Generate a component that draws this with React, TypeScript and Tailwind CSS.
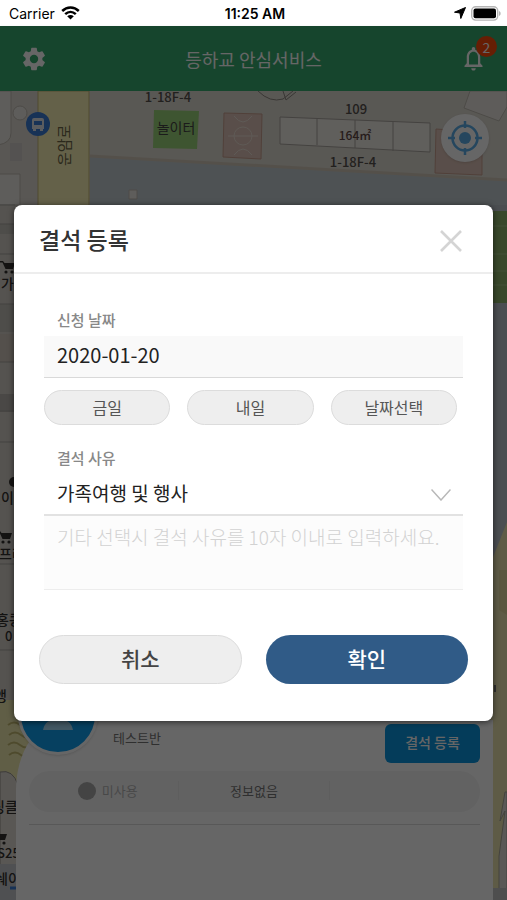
import React from "react";

const dateChoices = ["금일", "내일", "날짜선택"];

function StatusBar() {
  return (
    <div className="grid h-[26px] grid-cols-3 items-center bg-white pl-[9px] pr-[6px] font-['Inter',sans-serif] text-[14px] text-black">
      <div className="flex items-center gap-[6px]">
        <span>Carrier</span>
        <svg width="19" height="14" viewBox="0 0 19 14" fill="none" stroke="#000" strokeWidth="2.5" aria-hidden="true">
          <path d="M1.2 5C6 .3 13 .3 17.8 5" />
          <path d="M4.2 8.2c3.2-3 7.4-3 10.6 0" />
          <path d="M9.5 13.6 6.2 10.3c2-1.7 4.600-1.700 6.600 0Z" fill="#000" stroke="none" />
        </svg>
      </div>
      <div className="text-center font-semibold">11:25 AM</div>
      <div className="flex items-center justify-end gap-[5px]">
        <svg width="12" height="12" viewBox="0 0 12 12" aria-hidden="true">
          <path d="M11.500.5 6.800 11.500 6 6 .5 5.200Z" fill="#000" stroke="#000" strokeLinejoin="round" />
        </svg>
        <svg width="30" height="15" viewBox="0 0 30 15" aria-hidden="true">
          <rect x=".7" y=".7" width="26" height="13.400" rx="4" fill="#fff" stroke="#b5b5b5" strokeWidth="1.400" />
          <rect x="2.500" y="2.500" width="22.500" height="9.800" rx="2" fill="#000" />
          <path d="M28 5v5c2.200-1 2.200-4 0-5Z" fill="#b5b5b5" />
        </svg>
      </div>
    </div>
  );
}

function Header() {
  return (
    <header className="grid h-[65px] shrink-0 grid-cols-[1fr_auto_1fr] items-center bg-[#38ad72] px-[20px] shadow">
      <button type="button" aria-label="설정" className="justify-self-start">
        <svg width="28" height="28" viewBox="0 0 24 24" fill="#fff" aria-hidden="true">
          <path d="M19.140 12.940c.04-.3.06-.61.06-.94 0-.32-.02-.64-.07-.94l2.030-1.580a.49.49 0 0 0 .12-.61l-1.920-3.320a.488.488 0 0 0-.59-.22l-2.390.96c-.5-.38-1.030-.7-1.620-.94l-.36-2.540a.484.484 0 0 0-.48-.41h-3.840c-.24 0-.43.17-.47.41l-.36 2.540c-.59.24-1.130.57-1.620.94l-2.390-.96a.477.477 0 0 0-.59.22L2.740 8.870c-.12.21-.08.47.12.61l2.030 1.580c-.05.3-.09.63-.09.94s.02.64.07.94l-2.030 1.580a.49.49 0 0 0-.12.61l1.920 3.320c.12.22.37.29.59.22l2.390-.96c.5.38 1.030.7 1.620.94l.36 2.540c.05.24.24.41.48.41h3.840c.24 0 .44-.17.47-.41l.36-2.540c.59-.24 1.130-.56 1.620-.94l2.390.96c.22.08.47 0 .59-.22l1.920-3.320a.477.477 0 0 0-.12-.61l-2.010-1.580zM12 15.600A3.600 3.600 0 1 1 12 8.400a3.600 3.600 0 0 1 0 7.200z" />
        </svg>
      </button>
      <h1 className="text-[18px] leading-[26px] text-white">등하교 안심서비스</h1>
      <button type="button" aria-label="알림" className="relative justify-self-end">
        <svg width="27" height="29" viewBox="0 0 24 24" fill="#fff" preserveAspectRatio="none" aria-hidden="true">
          <path d="M12 22c1.100 0 2-.9 2-2h-4c0 1.100.9 2 2 2zm6-6v-5c0-3.070-1.630-5.640-4.500-6.320V4c0-.83-.67-1.500-1.500-1.500s-1.500.67-1.500 1.500v.68C7.640 5.360 6 7.920 6 11v5l-2 2v1h16v-1l-2-2zm-2 1H8v-6c0-2.480 1.510-4.500 4-4.500s4 2.020 4 4.500v6z" />
        </svg>
        <span className="absolute -right-[10px] -top-[8px] flex size-[21px] items-center justify-center rounded-full bg-[#ff4b0a] text-[14px] leading-[20px] text-white">
          2
        </span>
      </button>
    </header>
  );
}

function Cart({ x, y }: { x: number; y: number }) {
  return (
    <g transform={`translate(${x} ${y})`} fill="#33312f">
      <path d="M0 0h3l1.500 2H15l-2 6H5.500L2.500 1.500H0Z" />
      <circle cx="6" cy="11" r="1.600" />
      <circle cx="12" cy="11" r="1.600" />
    </g>
  );
}

function StreetMap() {
  return (
    <svg
      className="absolute inset-0 size-full"
      viewBox="0 91 507 809"
      preserveAspectRatio="xMidYMin slice"
      fontFamily="'Noto Sans CJK KR', sans-serif"
      role="img"
      aria-label="지도"
    >
      <rect y="91" width="507" height="809" fill="#dedad2" />
      <path d="M90 91h417v90L300 172 90 158Z" fill="#dfdbd2" />
      <path d="M90 156 300 168l207 12v30H90Z" fill="#c3cdd3" />
      <path d="M90 156 300 168l207 12" stroke="#d2c9ba" strokeWidth="3" fill="none" />
      <g fill="#ece9e3" stroke="#c0bbb2">
        <path d="M-2 91h13v42q0 10-13 12Z" />
        <path d="M-2 174h22v31H-2Z" />
        <circle cx="20" cy="113" r="7" />
        <path d="M129 190h8v9h-8Z" />
      </g>
      <path d="M10 143h12v18H10Z" fill="#d2cdca" />
      <path d="M38 91h51v120H38Z" fill="#fbf3b6" stroke="#c9b978" />
      <text transform="translate(70 166) rotate(-90)" fontSize="15" fill="#6d6748">운암로</text>
      <path d="m154 110 45 1-2 38-44-1Z" fill="#9cd47a" />
      <text x="176" y="133" textAnchor="middle" fontSize="14" fill="#444">놀이터</text>
      <text x="168" y="102" textAnchor="middle" fontSize="13" fontWeight="500" fill="#55504c">1-18F-4</text>
      <g fill="#dfc4b8" stroke="#c9a090">
        <path d="m224 113 38 1-1 45-38-2Z" />
        <circle cx="243" cy="136" r="9" fill="none" stroke="#ece0d6" />
        <path d="M228 136h30M234 116q9 12 18 0M234 155q9-12 18 0" fill="none" stroke="#ece0d6" />
        <path d="m436 129 46 3v43l-47-2Z" />
      </g>
      <path d="M258 91q12 12 25 8l10-8M283 91l3 9 10-8" fill="none" stroke="#8e8983" />
      <path d="m470 91-6 17 35 13 8-14V91Z" fill="#ebe7e1" stroke="#c0bbb2" />
      <path d="m280 117 150 6v29l-150-8Z" fill="#f1ede7" stroke="#aaa6a0" />
      <path d="M317 119v26M355 120v28M393 122v29" stroke="#aaa6a0" />
      <g textAnchor="middle" fill="#55504c" fontWeight="500">
        <text x="356" y="114" fontSize="13">109</text>
        <text x="355" y="140" fontSize="12" fill="#5f4844">164㎡</text>
        <text x="353" y="167" fontSize="13">1-18F-4</text>
      </g>
      <circle cx="38" cy="124" r="12" fill="#3b7dd8" />
      <path d="M34 118h8q2 0 2 2v9H32v-9q0-2 2-2Zm0 3v4h8v-4Zm-1 8h3v2h-3Zm7 0h3v2h-3Z" fill="#e2e6ed" />

      <path d="M0 205h15v500H0Z" fill="#d5d0c9" />
      <path d="M0 224h15v10H0Zm0 80h15v28H0Z" fill="#c4c0ba" />
      <path d="M0 334h15v28H0Z" fill="#d1c7bf" />
      <path d="M0 394h15v18H0Z" fill="#b8b5b0" />
      <path d="M0 205h15M0 224h15M0 254h15M0 304h15M0 362h15M0 411h15M0 442h15M0 564h15M0 650h15" stroke="#a9a5a0" />
      <path d="M0 700h100v100H0Z" fill="#f1ebaf" />
      <g stroke="#c4ba72" fill="none" strokeWidth="2">
        <path d="M8 725q6-5 12 0t14 0M9 735q6-5 12 0t14 0M8 745q6-5 12 0t14 0M9 755q6-5 12 0t14 0" />
      </g>
      <path d="M0 772q13-3 18 13v115H0Z" fill="#ded9d3" stroke="#98948e" />
      <path d="M0 864h18v36H0Z" fill="#c6c8cc" />
      <Cart x={0} y={261} />
      <Cart x={-3} y={531} />
      <Cart x={-8} y={832} />
      <circle cx="14" cy="482" r="5" fill="#33312f" />
      <g fill="#33312f" fontSize="14" fontWeight="500">
        <text x="1" y="289">가</text>
        <text x="-12" y="503">천이</text>
        <text x="-1" y="559">프라</text>
        <text x="-4" y="625">홍콩</text>
        <text x="5" y="641" fontSize="13">0</text>
        <text x="-6" y="701">앵</text>
        <text x="-8" y="812">싱클</text>
        <text x="-12" y="858" fontSize="13">GS25</text>
        <text x="-5" y="884">쉐이</text>
      </g>
      <path d="M10 888h6" stroke="#3b7dd8" strokeWidth="3" />

      <path d="M490 205h17v580h-17Z" fill="#bcc3ca" />
      <path d="M490 211h17v92h-17Z" fill="#8fb56c" />
      <path d="M490 226h17M490 254h17M490 271h17M490 285h17" stroke="#a7c989" />
      <path d="M507 522v368h-17V565Z" fill="#ebe4ae" />
      <path d="M499 570v40l8 5v-45Z" fill="#e0d89f" />
      <path d="m507 792-2 0-5 29 5-10-6 45v44h8Z" fill="#e0dcd7" stroke="#aaa79a" />
      <path d="M490 888h17v12h-17Z" fill="#c4c4c4" />
      <path d="M494 685h2v7h-2Z" fill="#777" />
    </svg>
  );
}

function StudentSheet() {
  return (
    <section className="relative ml-[16px] mr-[14px] mt-auto h-[180px] rounded-tl-[48px_70px] bg-white px-[13px] pt-[4px]">
      <div className="absolute -top-[45px] left-[2px] flex size-[80px] items-end justify-center overflow-hidden rounded-full border-[3px] border-white bg-[#0fa0f0] shadow">
        <svg width="40" height="50" viewBox="0 0 40 50" fill="#a9dcf8" aria-hidden="true">
          <circle cx="20" cy="7" r="7" />
          <path d="M5 28q2-11 15-11t15 11Z" />
        </svg>
      </div>
      <div className="flex items-center justify-between pl-[84px]">
        <p className="pb-[12px] text-[13px] leading-[20px] text-[#777]">테스트반</p>
        <button type="button" className="h-[39px] w-[95px] rounded-[6px] bg-[#0a96e0] pb-[2px] text-[14px] font-medium text-white">
          결석 등록
        </button>
      </div>
      <div className="mt-[8px] grid h-[41px] grid-cols-3 items-center rounded-full bg-[#f5f5f5] pb-[2px] text-[13px] text-[#777]">
        <div className="flex items-center justify-center gap-[6px] border-r border-[#ececec] pl-[8px] text-[#b5b5b5]">
          <span className="size-[18px] rounded-full bg-[#aaa]" />
          미사용
        </div>
        <div className="border-r border-[#ececec] text-center">정보없음</div>
      </div>
      <hr className="mt-[12px] border-[#dcdcdc]" />
    </section>
  );
}

function AbsenceDialog() {
  return (
    <form
      role="dialog"
      aria-labelledby="dialog-title"
      onSubmit={(event) => event.preventDefault()}
      className="w-full rounded-[8px] bg-white text-[#222] shadow-[0_1px_6px_rgba(0,0,0,0.6)]"
    >
      <div className="flex h-[69px] items-center justify-between border-b-2 border-[#ededed] pl-[25px] pr-[30px]">
        <h2 id="dialog-title" className="text-[23px] font-medium leading-[32px] text-[#333]">결석 등록</h2>
        <button type="button" aria-label="닫기" className="pt-[4px]">
          <svg width="24" height="24" viewBox="0 0 24 24" stroke="#d4d4d4" strokeWidth="2.600" aria-hidden="true">
            <path d="m2 2 20 20M22 2 2 22" />
          </svg>
        </button>
      </div>

      <div className="flex flex-col px-[30px] pt-[35px]">
        <label htmlFor="absence-date" className="pl-[13px] text-[15px] font-medium leading-[22px] text-[#888]">신청 날짜</label>
        <input
          id="absence-date"
          type="text"
          defaultValue="2020-01-20"
          className="mt-[5px] h-[42px] w-full border-b border-[#d9d9d9] bg-[#f9f9f9] px-[13px] pb-[4px] text-[20px] outline-none"
        />
        <div className="mt-[12px] grid grid-cols-3 gap-[17px] pr-[6px]">
          {dateChoices.map((choice) => (
            <button key={choice} type="button" className="h-[35px] rounded-full border border-[#dcdcdc] bg-[#eee] pb-[2px] text-[16px] leading-[24px] text-[#555]">
              {choice}
            </button>
          ))}
        </div>

        <label htmlFor="absence-reason" className="mt-[22px] pl-[13px] text-[15px] font-medium leading-[22px] text-[#888]">결석 사유</label>
        <div className="relative">
          <select
            id="absence-reason"
            className="h-[47px] w-full appearance-none border-b-2 border-[#e2e2e2] bg-white px-[13px] pt-[4px] text-[19px] outline-none"
          >
            <option>가족여행 및 행사</option>
          </select>
          <svg className="pointer-events-none absolute right-[12px] top-[20px]" width="20" height="12" viewBox="0 0 20 12" fill="none" stroke="#b8b8b8" strokeWidth="1.500" aria-hidden="true">
            <path d="m.5.5 9.500 10.500L19.500.5" />
          </svg>
        </div>
        <textarea
          aria-label="기타 사유"
          placeholder="기타 선택시 결석 사유를 10자 이내로 입력하세요."
          className="block h-[74px] w-full resize-none overflow-hidden border-b border-[#ededed] bg-[#fcfcfc] px-[13px] pt-[7px] text-[19px] font-light leading-[28px] outline-none placeholder:text-[#d2d2d2]"
        />
      </div>

      <div className="grid grid-cols-2 gap-[24px] px-[25px] pb-[37px] pt-[45px] text-[21px] font-medium">
        <button type="button" className="h-[49px] rounded-full border border-[#dcdcdc] bg-[#eee] pb-[2px] text-[#444]">취소</button>
        <button type="submit" className="h-[49px] rounded-full bg-[#305b87] pb-[2px] text-white">확인</button>
      </div>
    </form>
  );
}

export default function App() {
  return (
    <div className="flex min-h-screen flex-col overflow-hidden bg-white font-['Noto_Sans_CJK_KR',sans-serif]">
      <StatusBar />
      <div className="relative flex flex-1 flex-col">
        <Header />
        <main className="relative flex flex-1 flex-col">
          <StreetMap />
          <button type="button" aria-label="현재 위치" className="absolute right-[18px] top-[23px] flex size-[48px] items-center justify-center rounded-full bg-white shadow">
            <svg width="34" height="34" viewBox="0 0 34 34" fill="none" stroke="#5cb0ea" strokeWidth="2.500" aria-hidden="true">
              <circle cx="17" cy="17" r="12.500" />
              <circle cx="17" cy="17" r="6" fill="#5cb0ea" stroke="none" />
              <path d="M17 0v7M17 27v7M0 17h7M27 17h7" />
            </svg>
          </button>
          <StudentSheet />
        </main>
        <div className="absolute inset-0 flex items-center bg-black/60 px-[14px]">
          <AbsenceDialog />
        </div>
      </div>
    </div>
  );
}
